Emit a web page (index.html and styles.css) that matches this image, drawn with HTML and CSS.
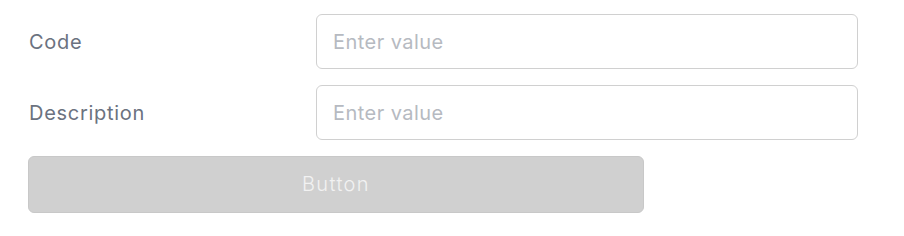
FILE: index.html
```html
<!DOCTYPE html>
<html lang="en">

<head>
    <meta charset="UTF-8">
    <meta name="viewport" content="width=device-width, initial-scale=1.0">
    <title>Form</title>
    <link rel="stylesheet" href="styles.css">
</head>

<body>

    <form class="form">

        <div class="row">
            <label class="label" for="code">Code</label>
            <input class="field" id="code" type="text" placeholder="Enter value">
        </div>

        <div class="row">
            <label class="label" for="description">Description</label>
            <input class="field" id="description" type="text" placeholder="Enter value">
        </div>

        <button class="submit" type="button" disabled>Button</button>

    </form>

</body>

</html>
```

FILE: styles.css
```css
body {
    margin: 0;
    background: white;
    font-family: Inter, "Liberation Sans", sans-serif;
}

.form {
    padding: 14px 0 0 28px;
    display: flex;
    flex-direction: column;
    gap: 16px;
}

.row {
    display: grid;
    grid-template-columns: 288px 542px;
    align-items: center;
}

.label {
    padding: 1px 0 0 1px;
    font-size: 20px;
    letter-spacing: 0.7px;
    color: #6b7280;
}

.field {
    box-sizing: border-box;
    height: 55px;
    padding: 0 16px;
    font-family: inherit;
    font-size: 20px;
    letter-spacing: 0.45px;
    color: #374151;
    background: white;
    border: 1px solid #d0d0d0;
    border-radius: 6px;
    outline: none;
}

.field::placeholder {
    color: #b6bac1;
}

.submit {
    box-sizing: border-box;
    width: 616px;
    height: 57px;
    padding-top: 0;
    font-family: inherit;
    font-size: 20px;
    font-weight: 300;
    letter-spacing: 1.4px;
    color: #f2f2f2;
    background-color: #d0d0d0;
    border: 1px solid #c8c8c8;
    border-radius: 6px;
}
```
